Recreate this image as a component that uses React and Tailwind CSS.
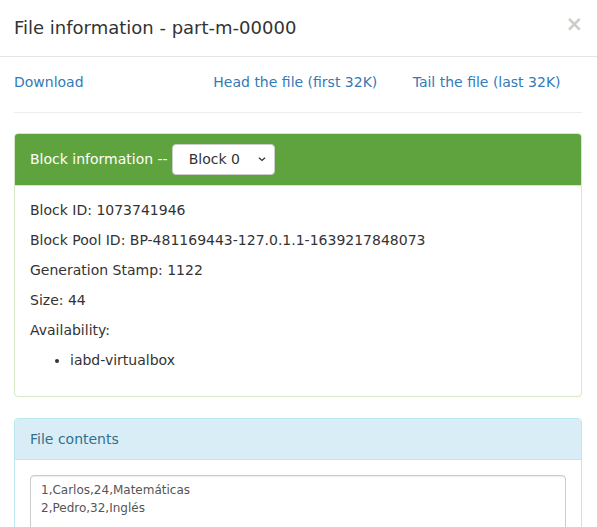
import React from 'react';

const font = { fontFamily: '"DejaVu Sans", sans-serif' };

export default function App() {
  return (
    <div className="w-[597px] h-[527px] overflow-hidden bg-white text-[14px] leading-[20px] text-[#333]" style={font}>
      <div className="flex items-center justify-between border-b border-[#e5e5e5] py-[15px] pl-[14px] pr-[15px]">
        <h4 className="text-[18px] leading-[25.7px] text-[#333]">File information - part-m-00000</h4>
        <button className="text-[21px] font-bold leading-none text-black opacity-20 -mt-[6px] -mr-[1px]">×</button>
      </div>

      <div className="py-[15px] pl-[14px] pr-[15px]">
        <div className="grid grid-cols-3 -mx-[15px] text-[#337ab7]">
          <div className="px-[15px]"><a>Download</a></div>
          <div className="px-[15px]"><a>Head the file (first 32K)</a></div>
          <div className="px-[15px]"><a>Tail the file (last 32K)</a></div>
        </div>

        <hr className="my-[20px] border-t border-[#eee]" />

        <div className="mb-[21px] rounded-[4px] border border-[#d6e9c6]">
          <div className="flex items-center rounded-t-[3px] bg-[#5fa33e] px-[15px] py-[10px] text-white border-b border-[#d6e9c6]">
            <span>Block information --</span>
            <div className="ml-[4px] flex h-[31px] w-[103px] items-center justify-between rounded-[4px] border border-[#ccc] bg-white pl-[16px] pr-[7px] text-[#333]">
              <span>Block 0</span>
              <svg width="10" height="10" viewBox="0 0 10 10" fill="none" stroke="#333" strokeWidth="1.3">
                <path d="M2 3.8 L5 6.5 L8 3.8" />
              </svg>
            </div>
          </div>
          <div className="px-[15px] pt-[14px] pb-[16px]">
            <p className="mb-[10px]">Block ID: 1073741946</p>
            <p className="mb-[10px]">Block Pool ID: BP-481169443-127.0.1.1-1639217848073</p>
            <p className="mb-[10px]">Generation Stamp: 1122</p>
            <p className="mb-[10px]">Size: 44</p>
            <p className="mb-[10px]">Availability:</p>
            <ul className="mb-[10px] list-disc pl-[40px]">
              <li>iabd-virtualbox</li>
            </ul>
          </div>
        </div>

        <div className="rounded-[4px] border border-[#bce8f1]">
          <div className="rounded-t-[3px] border-b border-[#bce8f1] bg-[#d9edf7] px-[15px] py-[10px] text-[#31708f]">
            File contents
          </div>
          <div className="p-[15px]">
            <textarea
              readOnly
              className="block h-[120px] w-full resize-none rounded-[4px] border border-[#ccc] px-[10px] py-[5px] text-[12px] leading-[18px] text-[#555] shadow-[inset_0_1px_1px_rgba(0,0,0,0.075)] outline-none"
              style={font}
              value={'1,Carlos,24,Matemáticas\n2,Pedro,32,Inglés\n'}
            />
          </div>
        </div>
      </div>
    </div>
  );
}
